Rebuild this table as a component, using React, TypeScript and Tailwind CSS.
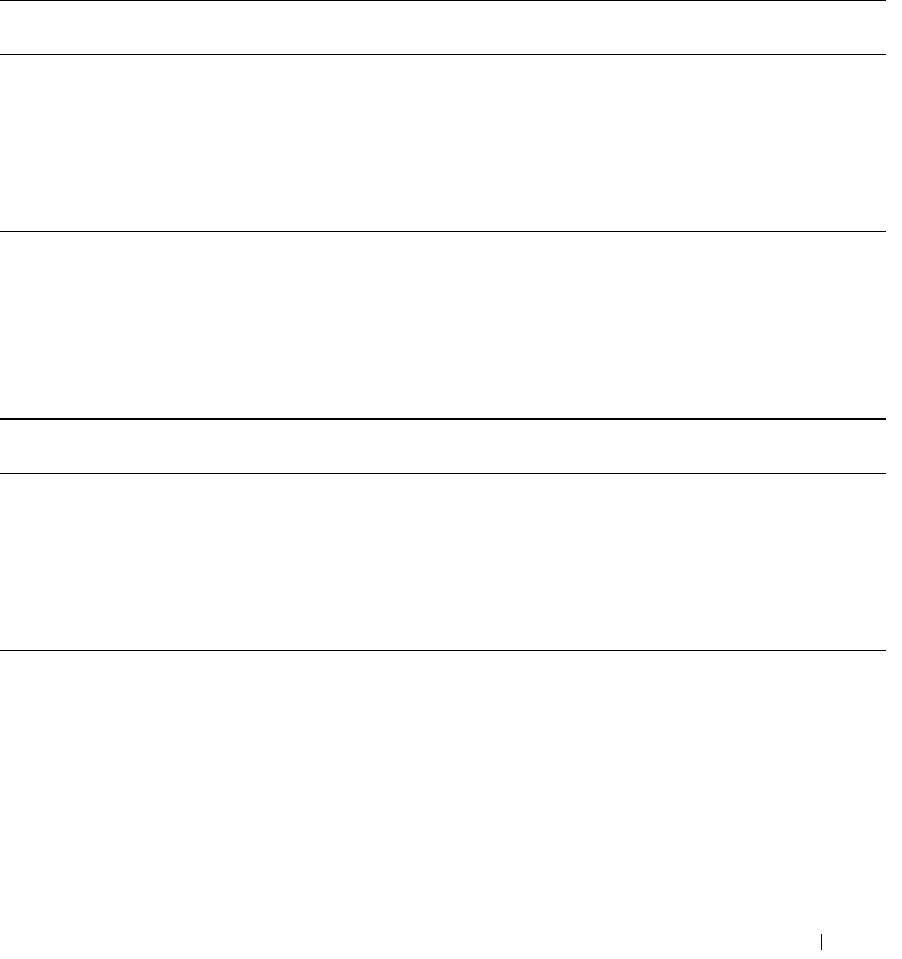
export default function App() {
  return (
    <div className="w-[902px] h-[959px] bg-white overflow-hidden" style={{ fontFamily: '"Liberation Sans", Arial, sans-serif' }}>
      <div className="w-[886px] flex flex-col">
        <div className="h-[54px] border-t border-black" />
        <div className="h-[177px] border-t border-black" />
        <div className="h-[187px] border-t border-black" />
        <div className="h-[55px] border-t-2 border-black" />
        <div className="h-[177px] border-t border-black" />
        <div className="h-[284px] border-t border-black" />
      </div>
      <div className="ml-[821px] w-px h-[16px] bg-black" />
    </div>
  );
}
